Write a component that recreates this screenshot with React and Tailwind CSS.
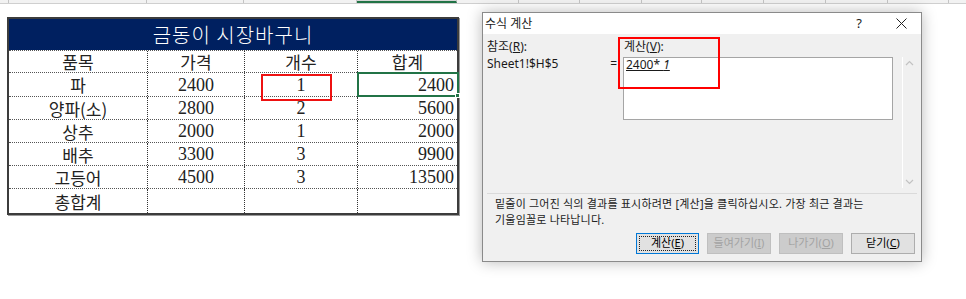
import React from 'react';

const headerCols = [9, 138, 97, 113, 100, 62, 61, 62, 60, 62, 62, 62, 61, 55];

const rows = [
  ['품목', '가격', '개수', '합계'],
  ['파', '2400', '1', '2400'],
  ['양파(소)', '2800', '2', '5600'],
  ['상추', '2000', '1', '2000'],
  ['배추', '3300', '3', '9900'],
  ['고등어', '4500', '3', '13500'],
  ['총합계', '', '', ''],
];
const rowHeights = ['h-[23px]', 'h-[24px]', 'h-[23px]', 'h-[23px]', 'h-[23px]', 'h-[23px]', 'h-[24px]'];

function ColumnStrip() {
  return (
    <div className="flex h-[4px] bg-[#f2f2f2] border-b border-[#cfcfcf]">
      {headerCols.map((w, i) => (
        <div
          key={i}
          style={{ width: w }}
          className={i === 4 ? 'shrink-0 bg-[#d6d6d6] border-b-2 border-[#217346] border-r border-r-[#c4c4c4]' : 'shrink-0 border-r border-[#c4c4c4]'}
        />
      ))}
    </div>
  );
}

function ShoppingTable() {
  return (
    <div className="mt-[13px] w-[452px] border-2 border-[#3c3c3c] font-['Liberation_Serif','Noto_Sans_CJK_KR',serif] text-[18px] text-[#222] shadow-[1px_1px_0_#9a9a9a]">
      <div className="h-[31px] bg-[#002060] text-white text-[20px] leading-[31px] text-center font-['Noto_Sans_CJK_KR',sans-serif] font-light tracking-[1px]">
        금동이 시장바구니
      </div>
      {rows.map((r, ri) => (
        <div
          key={ri}
          className={`grid grid-cols-[139px_97px_113px_99px] ${rowHeights[ri]} ${ri < rows.length - 1 ? 'border-b border-dotted border-[#555]' : ''} ${ri === 0 ? 'border-t border-dotted border-[#555]' : ''}`}
        >
          {r.map((c, ci) => (
            <div
              key={ci}
              className={`relative flex items-center leading-none ${ci < 3 ? 'border-r border-dotted border-[#333]' : ''} ${ci === 3 && ri > 0 ? 'justify-end pr-[3px]' : 'justify-center'}`}
            >
              <span className={ci === 0 || ri === 0 ? "font-['Noto_Sans_CJK_KR',sans-serif] text-[17px]" : ''}>{c}</span>
              {ri === 1 && ci === 2 && (
                <div className="absolute left-[16px] top-[1px] w-[71px] h-[27px] border-2 border-[#ee1111] z-10" />
              )}
              {ri === 1 && ci === 3 && (
                <div className="absolute -left-[1px] -top-[1px] -right-[2px] -bottom-[1px] border-2 border-[#217346] z-10">
                  <div className="absolute -right-[3px] -bottom-[3px] w-[5px] h-[5px] bg-[#217346] border border-white" />
                </div>
              )}
            </div>
          ))}
        </div>
      ))}
    </div>
  );
}

function Btn({ children, primary, disabled }) {
  if (primary) {
    return (
      <div className="w-[63px] h-[21px] border border-[#0078d7] bg-[#e1e1e1] p-[2px]">
        <div className="h-full border border-dotted border-[#222] flex items-center justify-center text-[11px] text-black">{children}</div>
      </div>
    );
  }
  return (
    <div
      className={`w-[64px] h-[21px] border flex items-center justify-center text-[11px] ${disabled ? 'border-[#bfbfbf] bg-[#cccccc] text-[#a3a3a3]' : 'border-[#adadad] bg-[#e1e1e1] text-black'}`}
    >
      {children}
    </div>
  );
}

function Chevron({ up }) {
  return (
    <svg width="9" height="6" viewBox="0 0 9 6">
      <path d={up ? 'M1 5 L4.5 1.5 L8 5' : 'M1 1 L4.5 4.5 L8 1'} fill="none" stroke="#c2c2c2" strokeWidth="1.2" />
    </svg>
  );
}

function EvaluateDialog() {
  return (
    <div className="mt-[8px] ml-[23px] w-[440px] h-[250px] border border-[#8a8a8a] bg-[#f0f0f0] shadow-[0_0_14px_rgba(0,0,0,0.28)] font-['Noto_Sans','Noto_Sans_CJK_KR',sans-serif] text-[12px] text-[#1a1a1a] flex flex-col">
      <div className="h-[21px] bg-white flex items-center pl-[2px]">
        <span className="text-[12px]">수식 계산</span>
        <span className="ml-auto mr-[34px] text-[13px]">?</span>
        <svg width="11" height="11" viewBox="0 0 11 11" className="mr-[14px]">
          <path d="M0.5 0.5 L10.5 10.5 M10.5 0.5 L0.5 10.5" stroke="#222" strokeWidth="1" />
        </svg>
      </div>

      <div className="flex h-[157px] pl-[4px]">
        <div className="w-[136px] pt-[5px] flex flex-col">
          <span className="h-[15px] leading-[15px]">참조(<u>R</u>):</span>
          <div className="mt-[2px] flex h-[15px] leading-[15px] pr-[6px]">
            <span>Sheet1!$H$5</span>
            <span className="ml-auto">=</span>
          </div>
        </div>
        <div className="relative w-[270px] pt-[5px] flex flex-col">
          <span className="h-[15px] leading-[15px] pl-[1px]">계산(<u>V</u>):</span>
          <div className="mt-[3px] h-[63px] bg-white border border-[#a5a5a5] px-[2px] leading-[13px]">
            <span className="underline">2400* <i>1</i></span>
          </div>
          <div className="absolute -left-[5px] top-[3px] w-[102px] h-[52px] border-2 border-[#ff0000]" />
        </div>
        <div className="ml-[9px] mt-[23px] w-[13px] h-[131px] border-l border-white flex flex-col items-center justify-between pt-[3px] pb-[3px] pl-[1px]">
          <Chevron up />
          <Chevron />
        </div>
      </div>

      <div className="mx-[4px] mt-[2px] border-t border-[#dadada]" />

      <div className="pl-[12px] pt-[2px] text-[11px] leading-[16px] tracking-[0.2px] text-[#222]">
        <p>밑줄이 그어진 식의 결과를 표시하려면 [계산]을 클릭하십시오. 가장 최근 결과는</p>
        <p>기울임꼴로 나타납니다.</p>
      </div>

      <div className="mt-auto mb-[7px] flex justify-end gap-[8px] pr-[6px]">
        <Btn primary>계산(<u>E</u>)</Btn>
        <Btn disabled>들여가기(<u>I</u>)</Btn>
        <Btn disabled>나가기(<u>O</u>)</Btn>
        <Btn>닫기(<u>C</u>)</Btn>
      </div>
    </div>
  );
}

export default function App() {
  return (
    <div className="w-[966px] h-[299px] bg-white overflow-hidden">
      <ColumnStrip />
      <div className="flex items-start pl-[7px]">
        <ShoppingTable />
        <EvaluateDialog />
      </div>
    </div>
  );
}
